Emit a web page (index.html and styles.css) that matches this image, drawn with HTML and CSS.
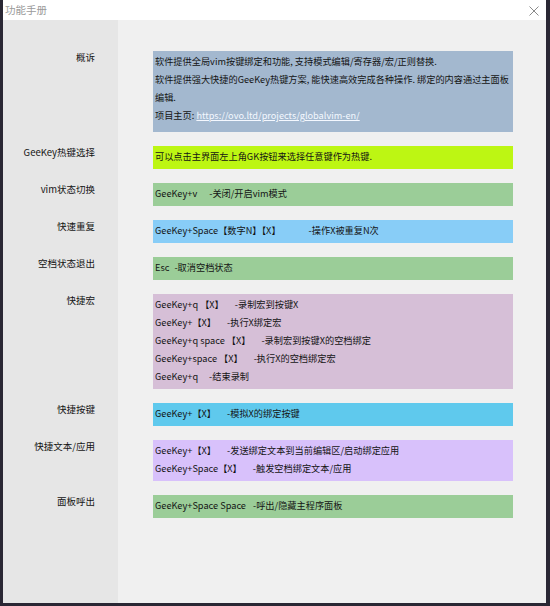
FILE: index.html
```html
<!DOCTYPE html>
<html lang="zh-CN">

<head>
    <meta charset="UTF-8">
    <meta name="viewport" content="width=device-width, initial-scale=1.0">
    <title>功能手册</title>
    <link rel="stylesheet" href="styles.css">
</head>

<body>
    <div class="window">
        <div class="titlebar">
            <span class="title">功能手册</span>
            <span class="close">
                <svg width="10" height="10" viewBox="0 0 10 10">
                    <path d="M0.5 0.5 L9.5 9.5 M9.5 0.5 L0.5 9.5" stroke="#8a8a8a" stroke-width="1" fill="none" />
                </svg>
            </span>
        </div>
        <div class="main">
            <div class="label">概诉</div>
            <div class="box intro">
                <p>软件提供全局vim按键绑定和功能, 支持模式编辑/寄存器/宏/正则替换.</p>
                <p>软件提供强大快捷的GeeKey热键方案, 能快速高效完成各种操作. 绑定的内容通过主面板编辑.</p>
                <p>项目主页: <a href="javascript:;">https://ovo.ltd/projects/globalvim-en/</a></p>
            </div>

            <div class="label">GeeKey热键选择</div>
            <div class="box lime">
                <p>可以点击主界面左上角GK按钮来选择任意键作为热键.</p>
            </div>

            <div class="label">vim状态切换</div>
            <div class="box green">
                <p><span class="key">GeeKey+v</span><span class="desc gap-s">-关闭/开启vim模式</span></p>
            </div>

            <div class="label">快速重复</div>
            <div class="box sky">
                <p><span class="key">GeeKey+Space【数字N】【X】</span><span class="desc gap-l">-操作X被重复N次</span></p>
            </div>

            <div class="label">空档状态退出</div>
            <div class="box green">
                <p><span class="key">Esc</span><span class="desc gap-xs">-取消空档状态</span></p>
            </div>

            <div class="label">快捷宏</div>
            <div class="box thistle">
                <p><span class="key">GeeKey+q 【X】</span><span class="desc">-录制宏到按键X</span></p>
                <p><span class="key">GeeKey+【X】</span><span class="desc">-执行X绑定宏</span></p>
                <p><span class="key">GeeKey+q space 【X】</span><span class="desc">-录制宏到按键X的空档绑定</span></p>
                <p><span class="key">GeeKey+space 【X】</span><span class="desc">-执行X的空档绑定宏</span></p>
                <p><span class="key">GeeKey+q</span><span class="desc">-结束录制</span></p>
            </div>

            <div class="label">快捷按键</div>
            <div class="box cyan">
                <p><span class="key">GeeKey+【X】</span><span class="desc">-模拟X的绑定按键</span></p>
            </div>

            <div class="label">快捷文本/应用</div>
            <div class="box lavender">
                <p><span class="key">GeeKey+【X】</span><span class="desc">-发送绑定文本到当前编辑区/启动绑定应用</span></p>
                <p><span class="key">GeeKey+Space【X】</span><span class="desc">-触发空档绑定文本/应用</span></p>
            </div>

            <div class="label">面板呼出</div>
            <div class="box green">
                <p><span class="key">GeeKey+Space Space</span><span class="desc gap-m">-呼出/隐藏主程序面板</span></p>
            </div>
        </div>
    </div>
</body>

</html>
```

FILE: styles.css
```css
html * {
    padding: 0;
    margin: 0;
    border: 0;
}

body {
    background: #2a2734;
    height: 606px;
    overflow: hidden;
    font-family: "Noto Sans CJK SC", "Noto Sans", sans-serif;
    color: #141414;
}

.window {
    margin-left: 3px;
    width: 543px;
    height: 603px;
    display: flex;
    flex-direction: column;
    background: #f0f0f0;
}

.titlebar {
    height: 20px;
    background: #fff;
    display: flex;
    align-items: center;
    justify-content: space-between;
    padding: 0 7px 0 2px;
}

.title {
    font-size: 10.5px;
    color: #9a9a9a;
    line-height: 20px;
}

.close {
    display: flex;
    margin-top: 1px;
}

.main {
    flex: 1;
    display: grid;
    grid-template-columns: 115px 395px;
    align-content: start;
    row-gap: 14px;
    padding-top: 31px;
    background: linear-gradient(to right, #e6e6e6 115px, #f0f0f0 115px);
}

.label {
    font-size: 9.5px;
    line-height: 12px;
    text-align: right;
    padding-right: 23px;
    white-space: nowrap;
}

.box {
    margin-left: 35px;
    padding: 1px 2px 4px;
    font-size: 9.2px;
    line-height: 18px;
}

.box p {
    white-space: nowrap;
}

.intro {
    background: #a3b8cf;
    padding-bottom: 8px;
}

.intro p {
    white-space: normal;
}

.intro a {
    color: #f4f8ff;
    text-decoration: underline;
}

.lime {
    background: #bdf613;
}

.green {
    background: #9bcd98;
}

.sky {
    background: #88cdf7;
}

.thistle {
    background: #d6bfd7;
}

.cyan {
    background: #5fc9ed;
}

.lavender {
    background: #d8c1fb;
}

.desc {
    margin-left: 11px;
}

.gap-xs {
    margin-left: 5px;
}

.gap-s {
    margin-left: 12px;
}

.gap-m {
    margin-left: 7px;
}

.gap-l {
    margin-left: 28px;
}
```
